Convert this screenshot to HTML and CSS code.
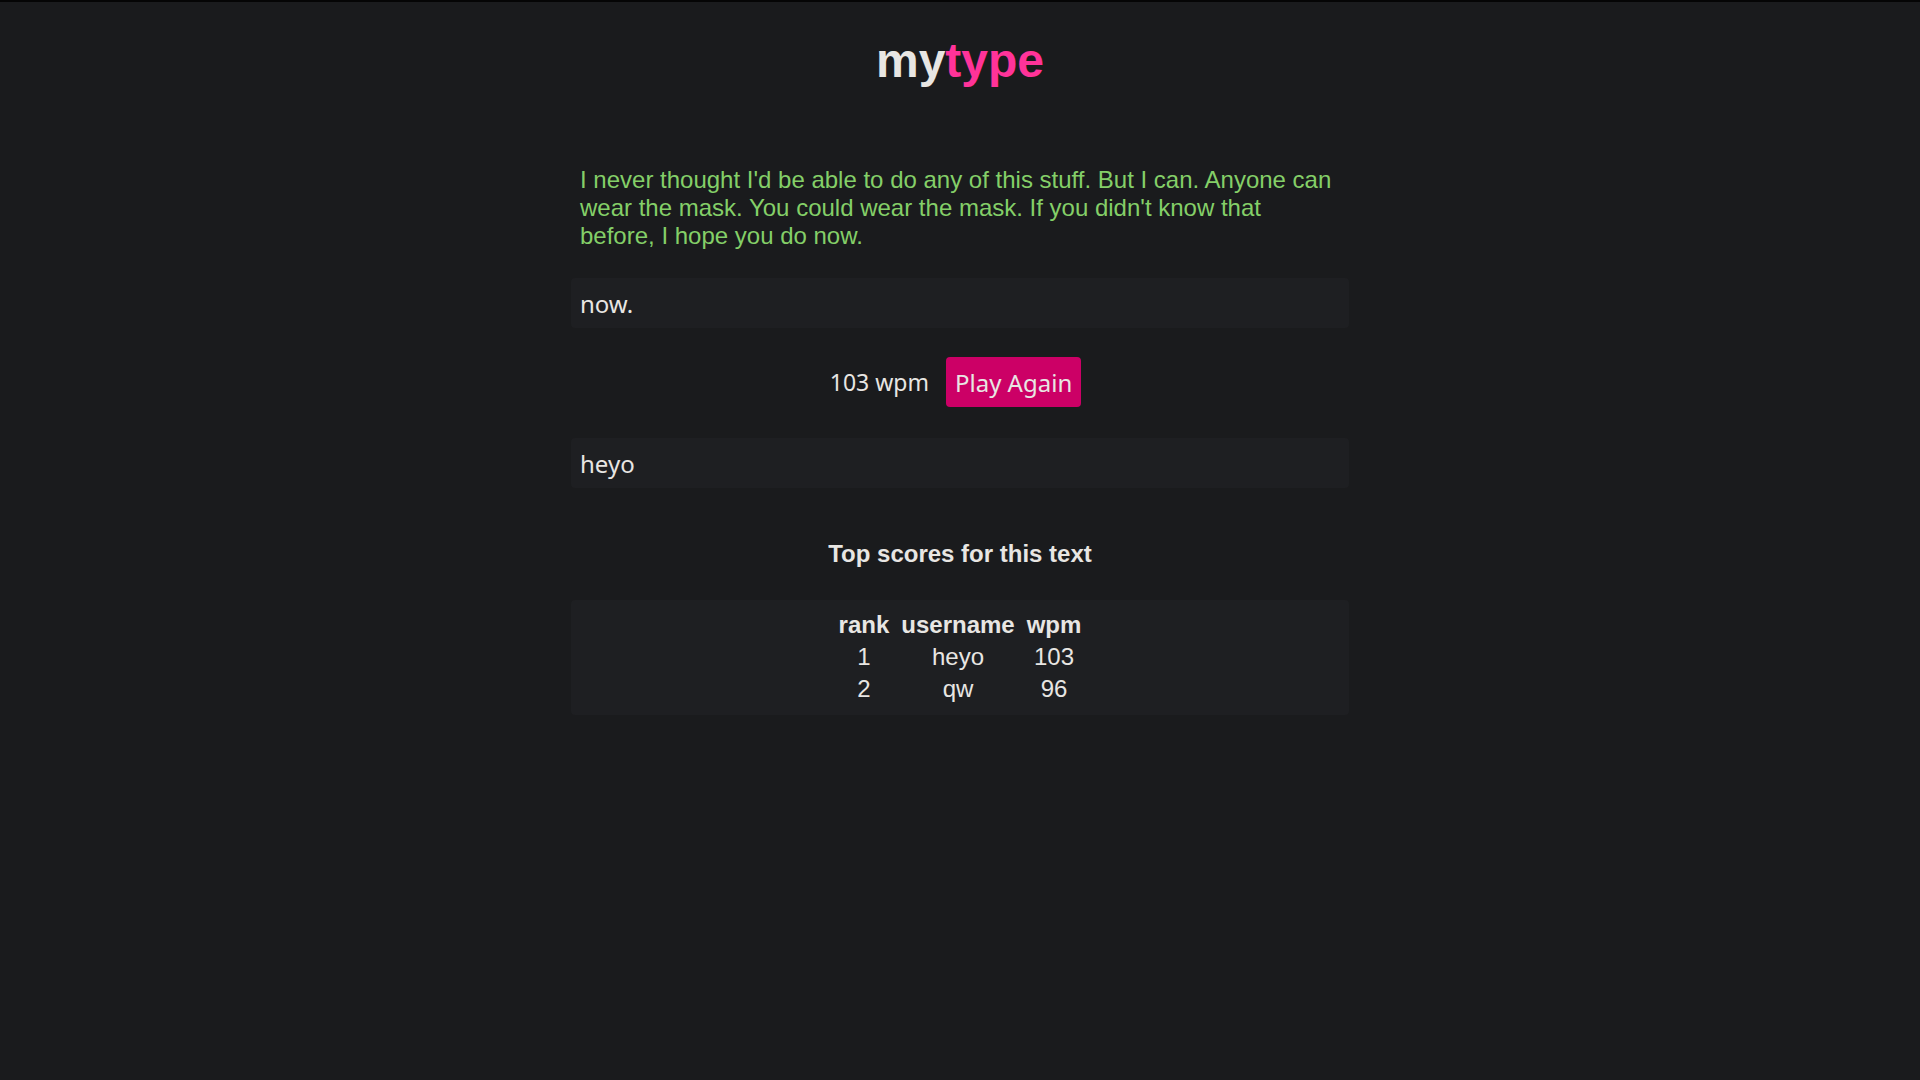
FILE: index.html
```html
<!DOCTYPE html>
<html lang="en">
<head>
<meta charset="utf-8">
<title>mytype</title>
<link rel="stylesheet" href="styles.css">
</head>
<body>
<div class="page">
  <h1 class="logo"><span class="logo-my">my</span><span class="logo-type">type</span></h1>
  <p class="quote">I never thought I'd be able to do any of this stuff. But I can. Anyone can wear the mask. You could wear the mask. If you didn't know that before, I hope you do now.</p>
  <div class="field">now.</div>
  <div class="result">
    <span class="wpm">103 wpm</span>
    <button class="play">Play Again</button>
  </div>
  <div class="field field-name">heyo</div>
  <h2 class="scores-title">Top scores for this text</h2>
  <div class="scores">
    <table class="scores-table">
      <thead>
        <tr><th>rank</th><th>username</th><th>wpm</th></tr>
      </thead>
      <tbody>
        <tr><td>1</td><td>heyo</td><td>103</td></tr>
        <tr><td>2</td><td>qw</td><td>96</td></tr>
      </tbody>
    </table>
  </div>
</div>
</body>
</html>
```
FILE: styles.css
```css
html, body {
  background: #1a1b1d;
}
body {
  margin: 0;
  border-top: 2px solid #050505;
  min-height: 1078px;
  color: #e8e6e3;
  font-family: "Liberation Sans", Arial, sans-serif;
}
.page {
  width: 778px;
  margin: 0 auto;
}
.logo {
  margin: 31px 0 0;
  font-size: 48px;
  font-weight: bold;
  line-height: normal;
  text-align: center;
}
.logo-my { color: #e8e6e3; }
.logo-type { color: #ff3399; }
.quote {
  margin: 78px 0 0;
  padding: 0 9px;
  font-size: 24px;
  line-height: normal;
  color: #84cf68;
}
.field {
  margin-top: 28px;
  height: 50px;
  box-sizing: border-box;
  padding: 0 9px;
  display: flex;
  align-items: center;
  background: #1e1f22;
  border-radius: 4px;
  font-family: "Noto Sans", sans-serif;
  font-size: 24px;
  color: #e8e6e3;
}
.field-name {
  margin-top: 31px;
}
.result {
  margin-top: 29px;
  display: flex;
  justify-content: center;
  align-items: center;
  gap: 17px;
  padding-right: 9px;
}
.wpm {
  font-family: "Noto Sans", sans-serif;
  font-size: 23px;
  color: #e8e6e3;
}
.play {
  height: 50px;
  padding: 0 9px;
  border: none;
  border-radius: 4px;
  background: #cc0066;
  color: #e8e6e3;
  font-family: "Noto Sans", sans-serif;
  font-size: 24px;
  cursor: pointer;
}
.scores-title {
  margin: 52px 0 0;
  font-size: 24px;
  font-weight: bold;
  line-height: normal;
  text-align: center;
}
.scores {
  margin-top: 32px;
  padding: 8px 0 9px;
  background: #1e1f22;
  border-radius: 4px;
  display: flex;
  justify-content: center;
}
.scores-table {
  font-size: 24px;
  border-spacing: 2px;
}
.scores-table th,
.scores-table td {
  padding: 1px 5px;
  text-align: center;
  line-height: normal;
}
.scores-table th {
  font-weight: bold;
}
```
